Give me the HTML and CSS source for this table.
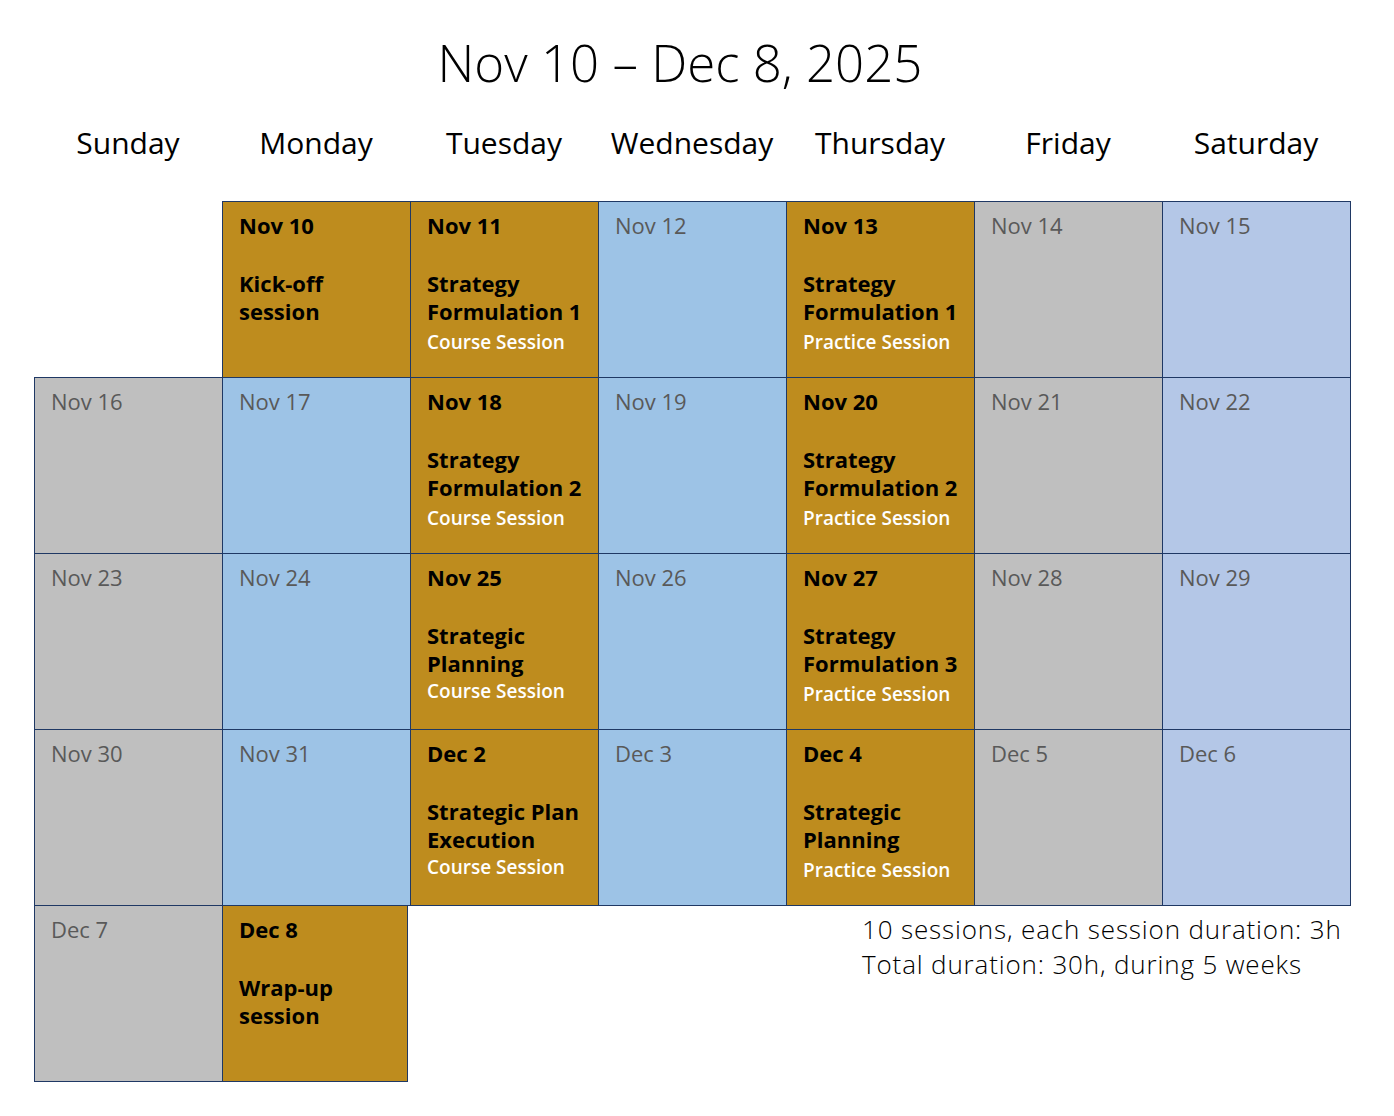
FILE: index.html
```html
<!DOCTYPE html>
<html lang="en">
<head>
<meta charset="utf-8">
<title>Nov 10 – Dec 8, 2025</title>
<link rel="stylesheet" href="styles.css">
</head>
<body>
<div class="page">
  <h1 class="title">Nov 10 – Dec 8, 2025</h1>
  <div class="days">
    <div>Sunday</div><div>Monday</div><div>Tuesday</div><div>Wednesday</div><div>Thursday</div><div>Friday</div><div>Saturday</div>
  </div>
  <div class="cal">
    <div class="cell gold first"><div class="date">Nov 10</div><div class="name">Kick-off<br>session</div></div>
    <div class="cell gold"><div class="date">Nov 11</div><div class="name">Strategy<br>Formulation 1</div><div class="kind">Course Session</div></div>
    <div class="cell blue"><div class="date">Nov 12</div></div>
    <div class="cell gold"><div class="date">Nov 13</div><div class="name">Strategy<br>Formulation 1</div><div class="kind">Practice Session</div></div>
    <div class="cell grey"><div class="date">Nov 14</div></div>
    <div class="cell lblue"><div class="date">Nov 15</div></div>

    <div class="cell grey"><div class="date">Nov 16</div></div>
    <div class="cell blue"><div class="date">Nov 17</div></div>
    <div class="cell gold"><div class="date">Nov 18</div><div class="name">Strategy<br>Formulation 2</div><div class="kind">Course Session</div></div>
    <div class="cell blue"><div class="date">Nov 19</div></div>
    <div class="cell gold"><div class="date">Nov 20</div><div class="name">Strategy<br>Formulation 2</div><div class="kind">Practice Session</div></div>
    <div class="cell grey"><div class="date">Nov 21</div></div>
    <div class="cell lblue"><div class="date">Nov 22</div></div>

    <div class="cell grey"><div class="date">Nov 23</div></div>
    <div class="cell blue"><div class="date">Nov 24</div></div>
    <div class="cell gold"><div class="date">Nov 25</div><div class="name">Strategic<br>Planning</div><div class="kind up">Course Session</div></div>
    <div class="cell blue"><div class="date">Nov 26</div></div>
    <div class="cell gold"><div class="date">Nov 27</div><div class="name">Strategy<br>Formulation 3</div><div class="kind">Practice Session</div></div>
    <div class="cell grey"><div class="date">Nov 28</div></div>
    <div class="cell lblue"><div class="date">Nov 29</div></div>

    <div class="cell grey"><div class="date">Nov 30</div></div>
    <div class="cell blue"><div class="date">Nov 31</div></div>
    <div class="cell gold"><div class="date">Dec 2</div><div class="name">Strategic Plan<br>Execution</div><div class="kind up">Course Session</div></div>
    <div class="cell blue"><div class="date">Dec 3</div></div>
    <div class="cell gold"><div class="date">Dec 4</div><div class="name">Strategic<br>Planning</div><div class="kind">Practice Session</div></div>
    <div class="cell grey"><div class="date">Dec 5</div></div>
    <div class="cell lblue"><div class="date">Dec 6</div></div>

    <div class="cell grey"><div class="date">Dec 7</div></div>
    <div class="cell gold narrow"><div class="date">Dec 8</div><div class="name">Wrap-up<br>session</div></div>
    <div class="notes">10 sessions, each session duration: 3h<br>Total duration: 30h, during 5 weeks</div>
  </div>
</div>
</body>
</html>
```

FILE: styles.css
```css
html, body {
  margin: 0;
  padding: 0;
  background: #ffffff;
}

body {
  font-family: "Open Sans", "Noto Sans", sans-serif;
  color: #000000;
}

.page {
  padding: 27px 0 20px 34px;
  width: 1316px;
}

.title {
  margin: 0;
  padding-right: 24px;
  text-align: center;
  font-size: 51px;
  font-weight: 300;
  line-height: 70px;
  height: 70px;
}

.days {
  display: grid;
  grid-template-columns: repeat(7, 188px);
  height: 104px;
  box-sizing: border-box;
  padding-top: 26px;
}

.days div {
  text-align: center;
  font-size: 30px;
  line-height: 40px;
  font-weight: 400;
}

.cal {
  display: grid;
  grid-template-columns: repeat(7, 188px);
  grid-auto-rows: 176px;
  padding-bottom: 1px;
}

.cell {
  border: 1px solid #1f3864;
  margin: 0 -1px -1px 0;
  padding: 9px 10px 0 16px;
  box-sizing: border-box;
}

.first {
  grid-column-start: 2;
}

.narrow {
  margin-right: 2px;
}

.gold { background: #be8c1e; }
.blue { background: #9dc3e6; }
.grey { background: #bfbfbf; }
.lblue { background: #b4c7e7; }

.date {
  font-size: 22px;
  line-height: 28px;
  color: #595959;
}

.gold .date {
  font-weight: 700;
  color: #000000;
}

.name {
  margin-top: 30px;
  font-size: 22px;
  line-height: 28px;
  font-weight: 700;
  white-space: nowrap;
}

.kind {
  margin-top: 3px;
  font-size: 19px;
  line-height: 28px;
  font-weight: 600;
  color: #ffffff;
  white-space: nowrap;
}

.kind.up {
  margin-top: 0;
}

.notes {
  grid-column: 5 / 8;
  padding: 7px 0 0 76px;
  font-size: 26px;
  line-height: 35px;
  font-weight: 350;
  letter-spacing: 0.85px;
  white-space: nowrap;
}
```
